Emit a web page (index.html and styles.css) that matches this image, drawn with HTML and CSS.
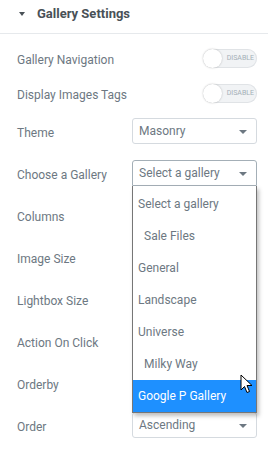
FILE: index.html
```html
<!DOCTYPE html>
<html>
  <head>
    <meta charset="utf-8">
    <title>Gallery Settings</title>
    <link rel="stylesheet" href="styles.css">
  </head>
  <body>
    <div class="panel">
      <div class="section-head">
        <span class="caret"></span>
        <span class="section-title">Gallery Settings</span>
      </div>

      <div class="controls">
        <div class="row row-toggle">
          <label>Gallery Navigation</label>
          <div class="switch"><span class="knob"></span><span class="switch-label">DISABLE</span></div>
        </div>
        <div class="row row-toggle">
          <label>Display Images Tags</label>
          <div class="switch"><span class="knob"></span><span class="switch-label">DISABLE</span></div>
        </div>
        <div class="row">
          <label>Theme</label>
          <div class="select">Masonry</div>
        </div>
        <div class="row">
          <label>Choose a Gallery</label>
          <div class="select-wrap">
            <div class="select open">Select a gallery</div>
            <ul class="dropdown">
              <li>Select a gallery</li>
              <li class="sub">Sale Files</li>
              <li>General</li>
              <li>Landscape</li>
              <li>Universe</li>
              <li class="sub">Milky Way</li>
              <li class="active">Google P Gallery</li>
            </ul>
            <svg class="cursor" width="14" height="20" viewBox="0 0 14 20">
              <path d="M1 1 L1 16 L4.5 12.5 L7 18.5 L9.5 17.5 L7 11.5 L12 11.5 Z" fill="#fff" stroke="#000" stroke-width="1" stroke-linejoin="round"/>
            </svg>
          </div>
        </div>
        <div class="row"><label>Columns</label></div>
        <div class="row"><label>Image Size</label></div>
        <div class="row"><label>Lightbox Size</label></div>
        <div class="row"><label>Action On Click</label></div>
        <div class="row"><label>Orderby</label></div>
        <div class="row">
          <label>Order</label>
          <div class="select">Ascending</div>
        </div>
      </div>
    </div>
  </body>
</html>
```

FILE: styles.css
```css
body {
  margin: 0;
  background: #fff;
  font-family: Roboto, 'Liberation Sans', sans-serif;
}

.panel {
  width: 268px;
}

.section-head {
  display: flex;
  align-items: center;
  height: 34px;
  padding: 0 0 6px 19px;
  border-bottom: 1px solid #e6e9ec;
  box-sizing: border-box;
}

.caret {
  width: 0;
  height: 0;
  border-left: 3px solid transparent;
  border-right: 3px solid transparent;
  border-top: 4px solid #495157;
  margin-right: 12px;
}

.section-title {
  font-size: 13px;
  font-weight: bold;
  color: #495157;
}

.controls {
  padding: 14px 11px 0 17px;
}

.row {
  display: flex;
  align-items: center;
  justify-content: space-between;
  height: 26px;
  margin-bottom: 16px;
}

.row-toggle {
  height: 20px;
  margin-bottom: 15px;
}

.row label {
  padding-top: 4px;
  font-size: 12px;
  color: #6d7882;
}

.switch {
  position: relative;
  width: 54px;
  height: 19px;
  border-radius: 10px;
  background: #f1f3f5;
  box-shadow: inset 0 0 0 1px #e0e3e6;
  box-sizing: border-box;
}

.knob {
  position: absolute;
  left: 0;
  top: 0;
  width: 19px;
  height: 19px;
  border-radius: 50%;
  background: #fff;
  box-shadow: 0 0 2px rgba(0, 0, 0, 0.25);
}

.switch-label {
  position: absolute;
  right: 3px;
  top: 6px;
  font-size: 7px;
  line-height: 7px;
  color: #a4afb7;
}

.select-wrap {
  position: relative;
}

.select {
  position: relative;
  width: 125px;
  height: 26px;
  line-height: 24px;
  padding-left: 6px;
  border: 1px solid #d5dadf;
  border-radius: 3px;
  box-sizing: border-box;
  font-size: 12px;
  color: #6d7882;
}

.select::after {
  content: "";
  position: absolute;
  right: 9px;
  top: 11px;
  border-left: 4px solid transparent;
  border-right: 4px solid transparent;
  border-top: 4px solid #6d7882;
}

.select.open {
  border-color: #a4afb7;
  border-radius: 3px 3px 0 0;
}

.dropdown {
  position: absolute;
  z-index: 2;
  left: 0;
  top: 26px;
  width: 125px;
  margin: 0;
  padding: 2px 0 0;
  list-style: none;
  background: #fff;
  border: 1px solid #767676;
  border-top: none;
  box-sizing: border-box;
  box-shadow: 2px 3px 4px rgba(0, 0, 0, 0.25);
}

.dropdown li {
  height: 32px;
  line-height: 33px;
  padding-left: 5px;
  font-size: 12px;
  color: #6d7882;
}

.dropdown li.sub {
  padding-left: 11px;
}

.dropdown li.active {
  background: #1e90ff;
  color: #fff;
}

.cursor {
  position: absolute;
  z-index: 3;
  left: 108px;
  top: 214px;
}
```
